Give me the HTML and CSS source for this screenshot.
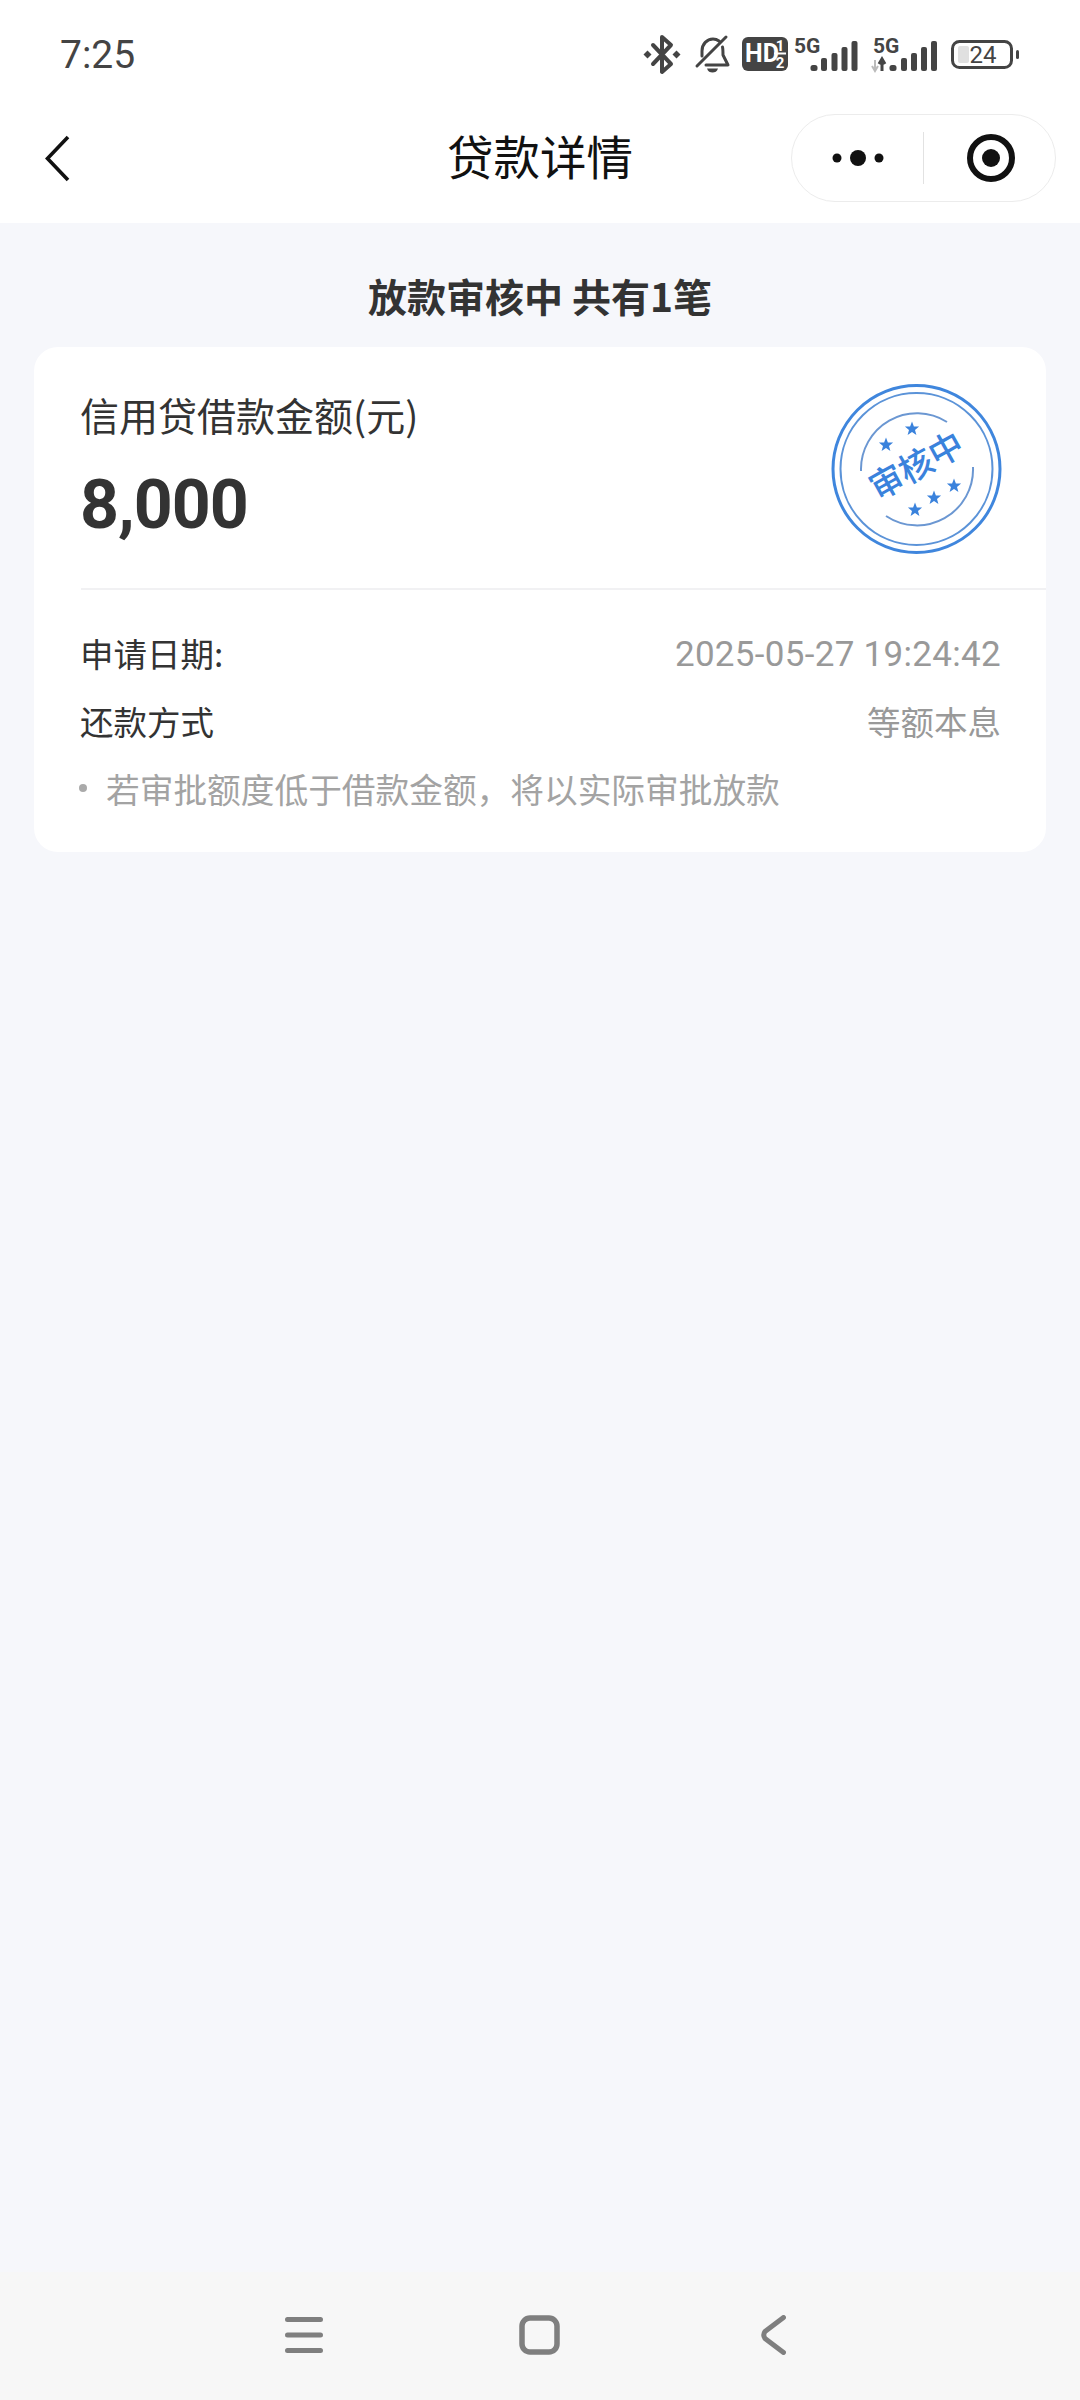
FILE: index.html
```html
<!DOCTYPE html>
<html lang="zh-CN">
<head>
  <meta charset="UTF-8">
  <title>贷款详情</title>
  <link rel="stylesheet" href="styles.css">
</head>
<body>
  <div class="page">
    <header class="top">
      <div class="status">
        <span class="time">7:25</span>
        <div class="status-icons">
          <svg class="ic-bt" width="36" height="39" viewBox="0 0 36 39">
            <path d="M9 10 L27 29 L18 37 V2 L27 10 L9 29" fill="none" stroke="#444" stroke-width="4" stroke-linejoin="round" stroke-linecap="round"/>
            <path d="M3.5 15.5 L7.5 19.5 L3.5 23.5 L-0.5 19.5Z M32.500 15.5 L36.500 19.500 L32.500 23.500 L28.500 19.500Z" fill="#444"/>
          </svg>
          <svg class="ic-bell" width="35" height="38" viewBox="0 0 35 38">
            <path d="M2 31 L31 2 M7 21 V16 C7 9 12 4 18 4 C20 4 22 4.500 24 6 M27.500 12 C28 14 28 16 28 20 L33 30 H11" fill="none" stroke="#444" stroke-width="3" stroke-linecap="round" stroke-linejoin="round"/>
            <path d="M12 33.500 H23 C22 36.500 20 37.500 17.500 37.500 C15 37.500 13 36.500 12 33.500Z" fill="#444"/>
          </svg>
          <svg class="ic-hd" width="46" height="34" viewBox="0 0 46 34">
            <rect width="46" height="34" rx="6" fill="#444"/>
            <text class="hd-text" x="3" y="25">HD</text>
            <text class="hd-frac" x="38" y="14" text-anchor="middle">1</text>
            <rect x="32" y="15.500" width="12" height="2" fill="#fff"/>
            <text class="hd-frac" x="38" y="31" text-anchor="middle">2</text>
          </svg>
          <svg class="ic-sig" width="64" height="33" viewBox="0 0 64 33">
            <text class="sig-text" x="0" y="15">5G</text>
            <rect x="16.500" y="27" width="7" height="6" rx="2.500" fill="#444"/>
            <rect x="27" y="20" width="6" height="13" rx="2" fill="#444"/>
            <rect x="37.500" y="15" width="6" height="18" rx="2" fill="#444"/>
            <rect x="47.500" y="9" width="6" height="24" rx="2" fill="#444"/>
            <rect x="57.500" y="3" width="6" height="30" rx="2" fill="#444"/>
          </svg>
          <svg class="ic-sig" width="66" height="33" viewBox="0 0 66 33">
            <text class="sig-text" x="2" y="15">5G</text>
            <path d="M4 22 V33 M1 28 L4 33 L7 28" fill="none" stroke="#bbb" stroke-width="2"/>
            <path d="M11 33 V21 M8 26 L11 21 L14 26" fill="none" stroke="#444" stroke-width="3"/>
            <rect x="18.500" y="27" width="7" height="6" rx="2.500" fill="#444"/>
            <rect x="30" y="20" width="6" height="13" rx="2" fill="#444"/>
            <rect x="40" y="15" width="6" height="18" rx="2" fill="#444"/>
            <rect x="50" y="9" width="6" height="24" rx="2" fill="#444"/>
            <rect x="60" y="3" width="6" height="30" rx="2" fill="#444"/>
          </svg>
          <svg class="ic-bat" width="68" height="29" viewBox="0 0 68 29">
            <rect x="1.500" y="1.500" width="59" height="26" rx="7" fill="none" stroke="#444" stroke-width="3"/>
            <rect x="7" y="6" width="11" height="17" rx="2" fill="#e0e0e0"/>
            <text class="bat-text" x="32" y="23" text-anchor="middle">24</text>
            <rect x="65" y="10" width="3" height="9" rx="1.500" fill="#444"/>
          </svg>
        </div>
      </div>
      <nav class="navbar">
        <svg class="back" width="25" height="47" viewBox="0 0 25 47">
          <path d="M23 2 L2.500 23.500 L23 45" fill="none" stroke="#111" stroke-width="3.600"/>
        </svg>
        <h1 class="nav-title">贷款详情</h1>
        <div class="capsule">
          <div class="capsule-dots">
            <svg width="56" height="18" viewBox="0 0 56 18">
              <circle cx="5" cy="9" r="4.500" fill="#111"/>
              <circle cx="26" cy="9" r="8" fill="#111"/>
              <circle cx="47" cy="9" r="4.500" fill="#111"/>
            </svg>
          </div>
          <div class="capsule-target">
            <svg width="48" height="48" viewBox="0 0 48 48">
              <circle cx="24" cy="24" r="21" fill="none" stroke="#111" stroke-width="6"/>
              <circle cx="24" cy="24" r="9" fill="#111"/>
            </svg>
          </div>
        </div>
      </nav>
    </header>

    <main class="content">
      <h2 class="summary">放款审核中 共有1笔</h2>
      <section class="card">
        <div class="card-top">
          <div class="amount-box">
            <div class="amount-label">信用贷借款金额(元)</div>
            <div class="amount">8,000</div>
          </div>
          <svg class="stamp" width="172" height="172" viewBox="0 0 172 172">
            <defs>
              <polygon id="star" points="0,-7.500 1.900,-2.500 7.100,-2.400 3,1 4.400,6.100 0,3.100 -4.400,6.100 -3,1 -7.100,-2.400 -1.900,-2.500"/>
            </defs>
            <circle cx="85.500" cy="86" r="83.500" fill="none" stroke="#3f86dd" stroke-width="3"/>
            <circle cx="85.500" cy="86" r="76" fill="none" stroke="#5b93d8" stroke-width="2"/>
            <path d="M30 88 A56 56 0 0 1 116 39 M142 84 A56 56 0 0 1 55 133" fill="none" stroke="#6b97d2" stroke-width="2"/>
            <g fill="#3a82dc">
              <use href="#star" x="81" y="46"/>
              <use href="#star" x="55" y="62"/>
              <use href="#star" x="123" y="103"/>
              <use href="#star" x="103" y="115"/>
              <use href="#star" x="84" y="127"/>
            </g>
            <text class="stamp-text" x="87" y="95" text-anchor="middle" transform="rotate(-29 86 86)">审核中</text>
          </svg>
        </div>
        <div class="card-rows">
          <div class="row">
            <span>申请日期:</span>
            <span class="row-value date">2025-05-27 19:24:42</span>
          </div>
          <div class="row">
            <span>还款方式</span>
            <span class="row-value">等额本息</span>
          </div>
          <div class="row note">
            <i class="bullet"></i>
            <span>若审批额度低于借款金额&#65292;将以实际审批放款</span>
          </div>
        </div>
      </section>
    </main>

    <footer class="sysnav">
      <svg class="nav-menu" width="38" height="36" viewBox="0 0 38 36">
        <path d="M2.500 2.500 H35.500 M2.500 18 H35.500 M2.500 33.500 H35.500" fill="none" stroke="#7f7f7f" stroke-width="5" stroke-linecap="round"/>
      </svg>
      <svg class="nav-home" width="41" height="40" viewBox="0 0 41 40">
        <rect x="3" y="3" width="35" height="34" rx="8" fill="none" stroke="#7f7f7f" stroke-width="5.500"/>
      </svg>
      <svg width="25" height="40" viewBox="0 0 25 40">
        <path d="M22.500 2.500 L4 16.500 Q1.500 20 4 23.500 L22.500 37.500" fill="none" stroke="#7f7f7f" stroke-width="5" stroke-linecap="round" stroke-linejoin="round"/>
      </svg>
    </footer>
  </div>
</body>
</html>
```

FILE: styles.css
```css
* {
  box-sizing: border-box;
}
body {
  margin: 0;
  font-family: "Noto Sans CJK SC", "Noto Sans", sans-serif;
  color: #333;
  background-color: #f6f7fb;
}
.page {
  display: flex;
  flex-direction: column;
  height: 2400px;
}

/* status bar + title */
.top {
  background: #fff;
}
.status {
  display: flex;
  align-items: center;
  justify-content: space-between;
  height: 110px;
  padding: 0 61px 0 60px;
}
.time {
  font-family: Roboto, sans-serif;
  font-size: 39px;
  color: #444;
}
.status-icons {
  display: flex;
  align-items: center;
  margin-bottom: 2px;
}
.ic-bt { margin-right: 15px; }
.ic-bell { margin-right: 12px; }
.ic-hd { margin-right: 6px; }
.ic-sig { margin-right: 13px; }
.ic-bat { margin-left: 1px; }
.status-icons svg {
  overflow: visible;
  display: block;
}
.hd-text {
  font: 700 25px Roboto, sans-serif;
  fill: #fff;
}
.hd-frac {
  font: 700 15px Roboto, sans-serif;
  fill: #fff;
}
.sig-text {
  font: 700 21px Roboto, sans-serif;
  fill: #444;
}
.bat-text {
  font: 400 24px Roboto, sans-serif;
  fill: #444;
}

.navbar {
  display: grid;
  grid-template-columns: 1fr auto 1fr;
  align-items: center;
  padding: 4px 24px 21px;
}
.back {
  display: block;
  margin-left: 21px;
}
.nav-title {
  margin: 0 0 6px;
  font-size: 46.500px;
  font-weight: 400;
  line-height: 82px;
  color: #111;
}
.capsule {
  justify-self: end;
  display: flex;
  align-items: center;
  width: 265px;
  height: 88px;
  border: 1px solid #ececec;
  border-radius: 44px;
}
.capsule-dots {
  display: flex;
  justify-content: center;
  width: 132px;
  height: 52px;
  align-items: center;
  padding-left: 4px;
  border-right: 1px solid #e2e2e2;
}
.capsule-target {
  flex: 1;
  display: flex;
  justify-content: center;
  padding-left: 3px;
}

/* page body */
.content {
  flex: 1;
  padding-top: 47px;
}
.summary {
  margin: -3px 0 24px;
  font-size: 39px;
  font-weight: 700;
  line-height: 56px;
  text-align: center;
  color: #333;
}
.card {
  margin: 0 34px;
  background: #fff;
  border-radius: 24px;
}
.card-top {
  display: flex;
  justify-content: space-between;
  align-items: flex-start;
  margin-left: 47px;
  padding: 42px 43px 33px 0;
  border-bottom: 2px solid #f1f1f3;
}
.amount-box {
  margin-left: -1px;
}
.amount-label {
  font-size: 39px;
  line-height: 50px;
}
.amount {
  margin-top: 26px;
  font-family: Roboto, sans-serif;
  font-size: 68px;
  font-weight: 700;
  line-height: 80px;
  letter-spacing: -1px;
}
.stamp {
  display: block;
  margin-top: -6px;
}
.stamp-text {
  font-size: 34px;
  font-weight: 500;
  fill: #3a82dc;
}
.card-rows {
  padding: 28px 45px 30px 46px;
}
.row {
  display: flex;
  justify-content: space-between;
  align-items: center;
  height: 68px;
  font-size: 33.500px;
}
.row-value {
  color: #999;
}
.date {
  padding-top: 4px;
  font-family: Roboto, sans-serif;
  font-size: 35px;
  letter-spacing: 0.3px;
}
.note {
  justify-content: flex-start;
  font-size: 33.700px;
  color: #a3a3a3;
}
.bullet {
  width: 8px;
  height: 8px;
  margin: 0 19px 0 -1px;
  border-radius: 50%;
  background: #aaa;
}

.sysnav {
  display: flex;
  align-items: center;
  height: 128px;
  padding: 0 0 2px 285px;
  background: #f7f7f7;
}
.sysnav svg {
  display: block;
}
.nav-menu { margin-right: 196px; }
.nav-home { margin-right: 201px; }
```
